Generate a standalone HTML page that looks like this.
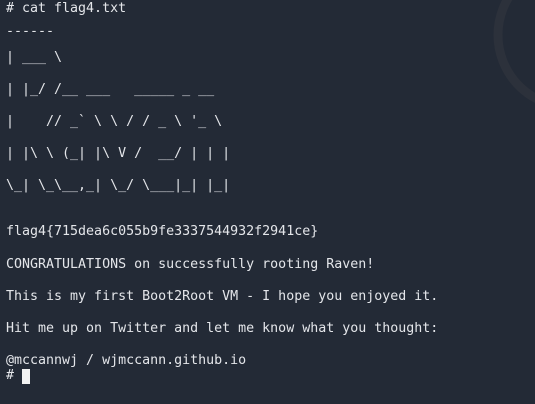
<!DOCTYPE html>
<html><head><meta charset="utf-8"><style>
html,body{margin:0;padding:0;}
body{width:535px;height:404px;background:#232a36;overflow:hidden;position:relative;font-family:"DejaVu Sans Mono","Liberation Mono",monospace;font-size:13.3px;color:#e4e6ea;}
.l{position:absolute;left:6px;white-space:pre;line-height:16px;height:16px;}
.c{position:absolute;left:22px;top:369px;width:8px;height:15px;background:#f2f2f2;}
svg{position:absolute;left:0;top:0;}
</style></head><body>
<svg width="535" height="404"><circle cx="570" cy="35" r="72" fill="none" stroke="#2c313b" stroke-width="9"/></svg>
<div class="l" style="top:1px">&#35; cat flag4.txt</div>
<div class="l" style="top:24px">------</div>
<div class="l" style="top:50px">| ___ \</div>
<div class="l" style="top:82px">| |_/ /__ ___   _____ _ __</div>
<div class="l" style="top:114px">|    // _` \ \ / / _ \ '_ \</div>
<div class="l" style="top:146px">| |\ \ (_| |\ V /  __/ | | |</div>
<div class="l" style="top:178px">\_| \_\__,_| \_/ \___|_| |_|</div>
<div class="l" style="top:224px">flag4{715dea6c055b9fe3337544932f2941ce}</div>
<div class="l" style="top:257px">CONGRATULATIONS on successfully rooting Raven!</div>
<div class="l" style="top:289px">This is my first Boot2Root VM - I hope you enjoyed it.</div>
<div class="l" style="top:321px">Hit me up on Twitter and let me know what you thought:</div>
<div class="l" style="top:353px">@mccannwj / wjmccann.github.io</div>
<div class="l" style="top:368px">&#35;</div>
<div class="c"></div>
</body></html>
